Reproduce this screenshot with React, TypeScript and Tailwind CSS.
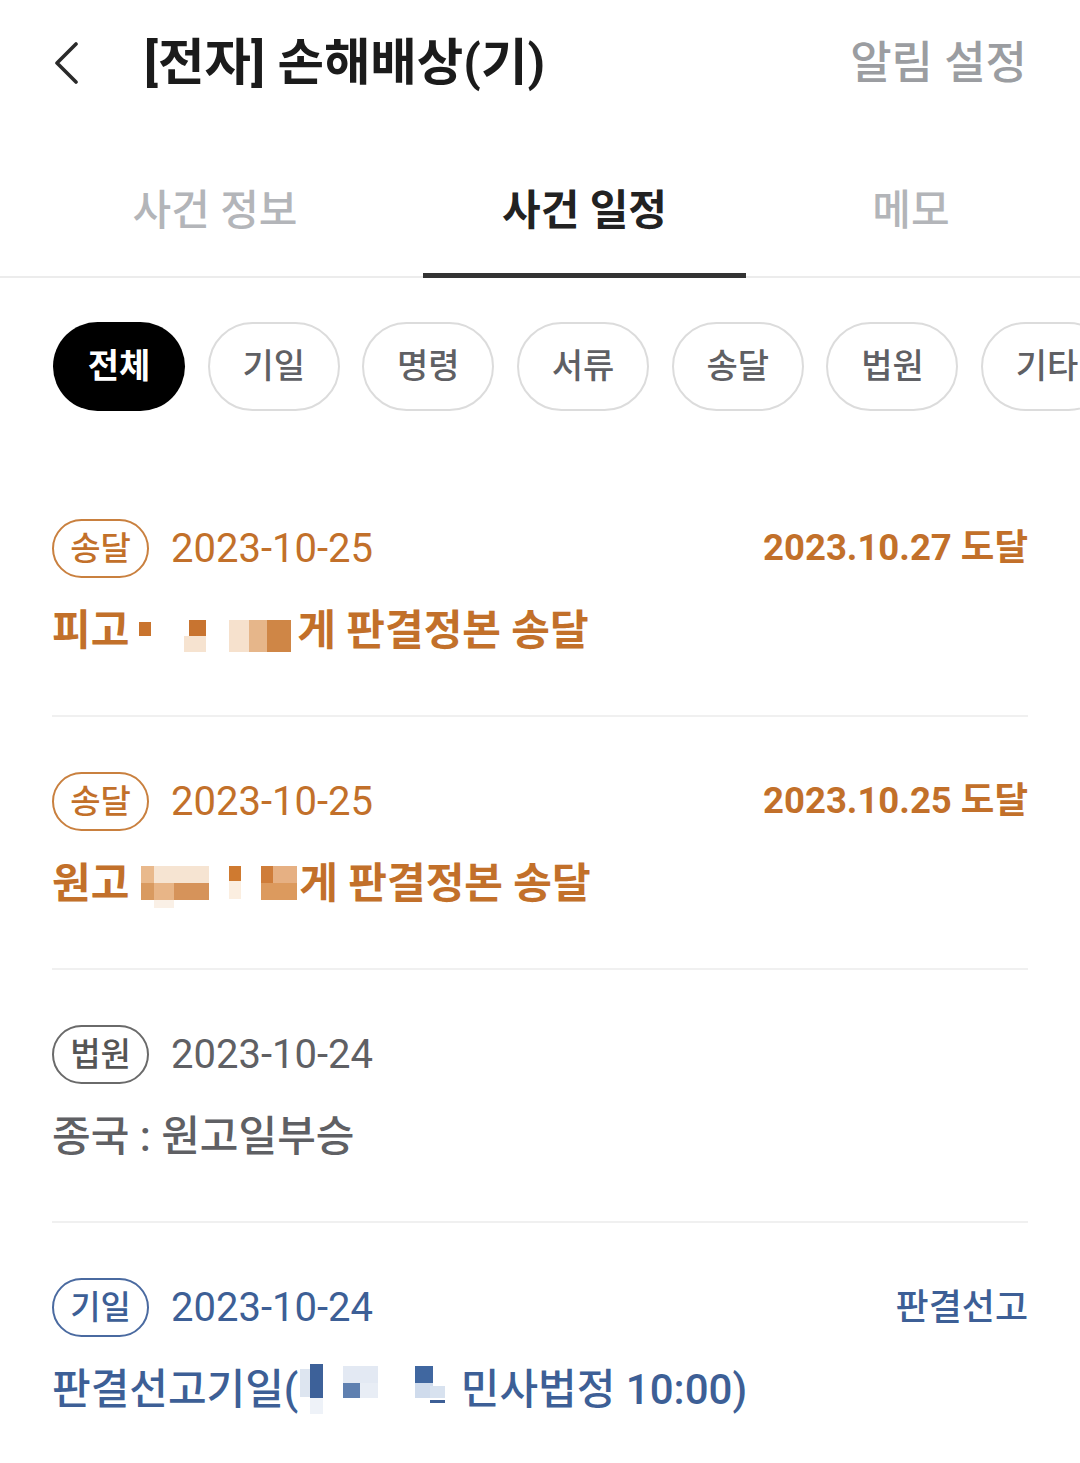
import React from "react";

type Blk = [number, number, number, number, string];

function Mosaic({ w, h, blocks }: { w: number; h: number; blocks: Blk[] }) {
  return (
    <svg width={w} height={h} viewBox={`0 0 ${w} ${h}`} className="inline-block shrink-0 align-middle">
      {blocks.map((b, i) => (
        <rect key={i} x={b[0]} y={b[1]} width={b[2]} height={b[3]} fill={b[4]} />
      ))}
    </svg>
  );
}

const m1: Blk[] = [
  [10, 17, 12, 14, "#c9742e"],
  [60, 15, 17, 16, "#c87430"],
  [55, 31, 22, 16, "#f6e3d0"],
  [100, 15, 20, 32, "#f6e1cd"],
  [120, 15, 18, 32, "#e6b68a"],
  [138, 15, 24, 32, "#cf8646"],
];

const m2: Blk[] = [
  [12, 8, 13, 17, "#e9b98c"],
  [25, 8, 55, 17, "#f6e4d2"],
  [12, 25, 13, 17, "#d99a60"],
  [25, 25, 20, 17, "#e8b587"],
  [45, 25, 35, 17, "#d6935a"],
  [25, 42, 20, 10, "#faf0e6"],
  [100, 8, 12, 15, "#cf7a30"],
  [100, 23, 12, 18, "#fbeee0"],
  [132, 8, 12, 17, "#cf7d3a"],
  [144, 8, 24, 17, "#e6b083"],
  [132, 25, 36, 17, "#dc9a5e"],
];

const m4: Blk[] = [
  [2, 5, 10, 28, "#dde5f0"],
  [12, 0, 13, 34, "#3d6199"],
  [12, 34, 13, 16, "#eef2f8"],
  [45, 2, 35, 17, "#e3e9f3"],
  [45, 19, 17, 15, "#5f80b0"],
  [62, 19, 18, 15, "#e8edf5"],
  [117, 2, 18, 17, "#4067a0"],
  [117, 19, 18, 15, "#cfdbec"],
  [132, 22, 15, 12, "#d8e2ef"],
  [132, 36, 15, 3, "#3d5f96"],
];

function Badge({ label, tone }: { label: string; tone: "orange" | "gray" | "blue" }) {
  const cls =
    tone === "orange"
      ? "border-[#c9803f] text-[#c2702a]"
      : tone === "blue"
      ? "border-[#4a6aa0] text-[#3d5f96]"
      : "border-[#6a6a6a] text-[#555555]";
  return (
    <div
      className={`flex h-[59px] w-[97px] shrink-0 items-center justify-center rounded-full border-2 text-[33px] font-medium leading-none ${cls}`}
    >
      {label}
    </div>
  );
}

function Item({
  badge,
  tone,
  date,
  right,
  rightCls,
  children,
  last,
}: {
  badge: string;
  tone: "orange" | "gray" | "blue";
  date: string;
  right?: string;
  rightCls?: string;
  children: React.ReactNode;
  last?: boolean;
}) {
  const dateCls =
    tone === "orange" ? "text-[#c2702a]" : tone === "blue" ? "text-[#3d5f96]" : "text-[#5f6064]";
  return (
    <div className={`pt-[55px] pb-[60px] ${last ? "" : "border-b-2 border-[#f0f0f0]"}`}>
      <div className="flex h-[59px] items-center">
        <Badge label={badge} tone={tone} />
        <div className={`ml-[22px] text-[40px] leading-none ${dateCls}`}>{date}</div>
        <div className="flex-1" />
        {right && <div className={`leading-none ${rightCls}`}>{right}</div>}
      </div>
      <div className="mt-[27px] flex h-[50px] items-center whitespace-nowrap">{children}</div>
    </div>
  );
}

export default function App() {
  const chips = ["기일", "명령", "서류", "송달", "법원", "기타"];
  return (
    <div className="h-[1463px] w-[1080px] overflow-hidden bg-white font-['Roboto','Noto_Sans_CJK_KR',sans-serif]">
      {/* header */}
      <div className="flex h-[126px] items-center pl-[53px] pr-[53px]">
        <svg width="26" height="42" viewBox="0 0 26 42" className="shrink-0">
          <path d="M23 2 L4 21 L23 40" fill="none" stroke="#2a2a2a" strokeWidth="3.6" strokeLinecap="round" strokeLinejoin="round" />
        </svg>
        <div className="ml-[65px] text-[50.5px] font-bold leading-none text-[#1b1b1b]">[전자] 손해배상(기)</div>
        <div className="flex-1" />
        <div className="text-[45px] font-medium leading-none text-[#9b9da1]">알림 설정</div>
      </div>

      {/* tabs */}
      <div className="flex h-[152px] border-b-2 border-[#ececec] pl-[53px]">
        <div className="relative -mb-[2px] flex w-[324px] flex-col items-center justify-end">
          <div className="text-[42px] font-medium leading-[50px] text-[#b3b5b9]">사건 정보</div>
          <div className="mt-[37px] h-[5px] w-full" />
        </div>
        <div className="relative -mb-[2px] ml-[46px] flex w-[323px] flex-col items-center justify-end">
          <div className="text-[42px] font-bold leading-[50px] text-[#222222]">사건 일정</div>
          <div className="mt-[37px] h-[5px] w-full bg-[#333333]" />
        </div>
        <div className="relative -mb-[2px] flex w-[330px] flex-col items-center justify-end">
          <div className="text-[42px] font-medium leading-[50px] text-[#b3b5b9]">메모</div>
          <div className="mt-[37px] h-[5px] w-full" />
        </div>
      </div>

      {/* chips */}
      <div className="mt-[44px] mb-[53px] flex gap-[22.7px] overflow-hidden pl-[53px]">
        <div className="flex h-[89px] w-[132px] shrink-0 items-center justify-center rounded-full bg-black text-[34px] font-bold text-white">
          전체
        </div>
        {chips.map((c) => (
          <div
            key={c}
            className="flex h-[89px] w-[132px] shrink-0 items-center justify-center rounded-full border-2 border-[#dcdcdc] text-[34px] font-medium text-[#5f6064]"
          >
            {c}
          </div>
        ))}
      </div>

      {/* list */}
      <div className="mx-[52px]">
        <Item
          badge="송달"
          tone="orange"
          date="2023-10-25"
          right="2023.10.27 도달"
          rightCls="text-[36.5px] font-bold text-[#c2702a]"
        >
          <span className="text-[42px] font-bold text-[#c2702a]">피고</span>
          <Mosaic w={168} h={50} blocks={m1} />
          <span className="text-[42px] font-bold text-[#c2702a]">게 판결정본 송달</span>
        </Item>
        <Item
          badge="송달"
          tone="orange"
          date="2023-10-25"
          right="2023.10.25 도달"
          rightCls="text-[36.5px] font-bold text-[#c2702a]"
        >
          <span className="text-[42px] font-bold text-[#c2702a]">원고</span>
          <Mosaic w={170} h={50} blocks={m2} />
          <span className="text-[42px] font-bold text-[#c2702a]">게 판결정본 송달</span>
        </Item>
        <Item badge="법원" tone="gray" date="2023-10-24">
          <span className="text-[42px] font-medium text-[#5f6064]">종국 : 원고일부승</span>
        </Item>
        <Item
          badge="기일"
          tone="blue"
          date="2023-10-24"
          right="판결선고"
          rightCls="text-[36px] font-medium text-[#3d5f96]"
          last
        >
          <span className="text-[42px] font-medium text-[#3d5f96]">판결선고기일(</span>
          <Mosaic w={152} h={50} blocks={m4} />
          <span className="text-[42px] font-medium text-[#3d5f96]">&nbsp;민사법정 10:00)</span>
        </Item>
      </div>
    </div>
  );
}
